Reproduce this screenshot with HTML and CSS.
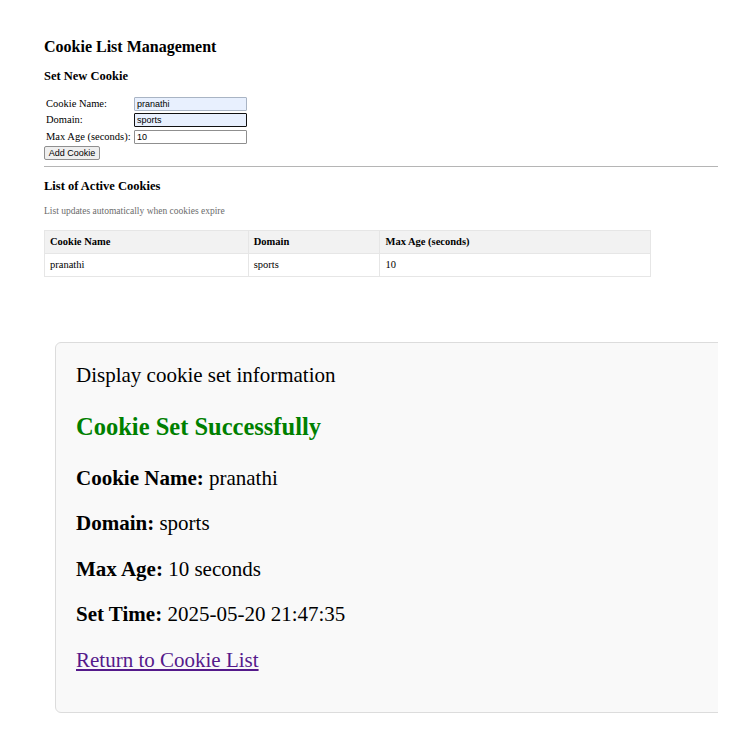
FILE: index.html
```html
<!DOCTYPE html>
<html>
<head>
<meta charset="utf-8">
<link rel="stylesheet" href="styles.css">
</head>
<body>
<div class="page">
  <section class="manager">
    <h1 class="title">Cookie List Management</h1>
    <h3 class="subtitle">Set New Cookie</h3>
    <form class="form">
      <label class="lbl">Cookie Name:</label>
      <input class="inp autofill" type="text" value="pranathi">
      <label class="lbl">Domain:</label>
      <input class="inp autofill focused" type="text" value="sports">
      <label class="lbl">Max Age (seconds):</label>
      <input class="inp" type="text" value="10">
      <button class="btn" type="button">Add Cookie</button>
    </form>
    <hr class="rule">
    <h3 class="subtitle list-title">List of Active Cookies</h3>
    <p class="note">List updates automatically when cookies expire</p>
    <table class="cookies">
      <thead>
        <tr><th class="c1">Cookie Name</th><th class="c2">Domain</th><th class="c3">Max Age (seconds)</th></tr>
      </thead>
      <tbody>
        <tr><td>pranathi</td><td>sports</td><td>10</td></tr>
      </tbody>
    </table>
  </section>
  <section class="card">
    <p class="intro">Display cookie set information</p>
    <h2 class="success">Cookie Set Successfully</h2>
    <p class="row"><strong>Cookie Name:</strong> pranathi</p>
    <p class="row"><strong>Domain:</strong> sports</p>
    <p class="row"><strong>Max Age:</strong> 10 seconds</p>
    <p class="row"><strong>Set Time:</strong> 2025-05-20 21:47:35</p>
    <p class="row last"><a class="back" href="#">Return to Cookie List</a></p>
  </section>
</div>
</body>
</html>
```
FILE: styles.css
```css
html, body {
  margin: 0;
  padding: 0;
  background: #ffffff;
}
body {
  font-family: "Liberation Serif", "Times New Roman", serif;
  color: #000;
}
.page {
  width: 718px;
  overflow: hidden;
  padding-top: 38px;
  padding-bottom: 18px;
}
.manager {
  margin-left: 44px;
}
.title {
  font-size: 16px;
  line-height: 18px;
  margin: 0 0 13px 0;
  font-weight: bold;
}
.subtitle {
  font-size: 12.5px;
  line-height: 14px;
  margin: 0 0 14px 0;
  font-weight: bold;
}
.form {
  display: grid;
  grid-template-columns: 88px 113px;
  grid-auto-rows: 14px;
  row-gap: 2.3px;
  align-items: center;
  padding-left: 2px;
  margin: 0;
}
.lbl {
  font-size: 10.5px;
  line-height: 14px;
  white-space: nowrap;
}
.inp {
  box-sizing: border-box;
  width: 113px;
  height: 14px;
  border: 1px solid #8f8f8f;
  border-radius: 1px;
  padding: 0 2px;
  margin: 0;
  font-family: "Liberation Sans", Arial, sans-serif;
  font-size: 9px;
  background: #ffffff;
  color: #000;
  outline: none;
}
.inp.autofill {
  background: #e8f0fe;
  border-color: #a9b4c4;
}
.inp.focused {
  border: 1.5px solid #111;
}
.btn {
  grid-column: 1 / 2;
  justify-self: start;
  margin-left: -2px;
  box-sizing: border-box;
  width: 56px;
  height: 14px;
  padding: 0;
  border: 1px solid #8f8f8f;
  border-radius: 2px;
  background: #efefef;
  font-family: "Liberation Sans", Arial, sans-serif;
  font-size: 9px;
  line-height: 12px;
  color: #000;
}
.rule {
  border: 0;
  border-top: 1px solid #b5b5b5;
  margin: 6px 0 0 0;
  width: 674px;
}
.list-title {
  margin-top: 12px;
  margin-bottom: 13px;
}
.note {
  font-size: 9.5px;
  line-height: 10px;
  color: #6b6b6b;
  margin: 0 0 14px 0;
}
.cookies {
  border-collapse: collapse;
  width: 607px;
  font-size: 10.5px;
}
.cookies th, .cookies td {
  border: 1px solid #e6e6e6;
  text-align: left;
  padding: 0 5px;
  height: 22px;
  line-height: 12px;
}
.cookies th {
  background: #f2f2f2;
  font-weight: bold;
}
.c1 { width: 193px; }
.c2 { width: 121px; }
.c3 { width: 260px; }
.card {
  margin: 65px -40px 0 55px;
  background: #f9f9f9;
  border: 1px solid #dcdcdc;
  border-radius: 6px;
  padding: 20px 20px 20px 20px;
}
.intro {
  font-size: 21px;
  line-height: 24px;
  margin: 0 0 26px 0;
}
.success {
  color: #008000;
  font-size: 24.5px;
  line-height: 28px;
  margin: 0 0 25px 0;
  font-weight: bold;
}
.row {
  font-size: 21px;
  line-height: 24px;
  margin: 0 0 21.5px 0;
}
.row strong {
  font-weight: bold;
}
.back {
  color: #551a8b;
  text-decoration: underline;
}
.row.last {
  margin-bottom: 20px;
}
```
